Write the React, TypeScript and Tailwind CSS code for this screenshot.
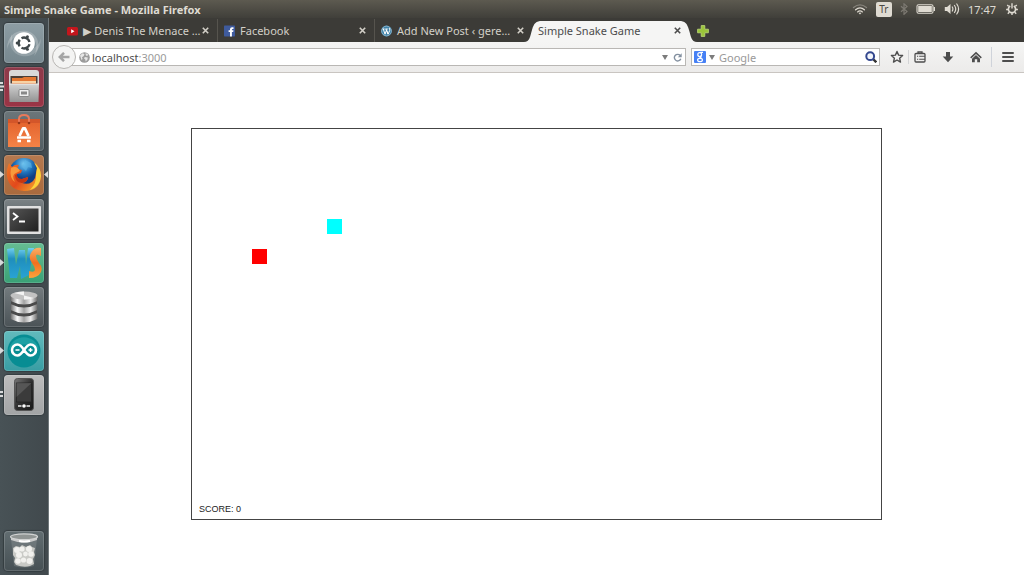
import React, { useState } from "react";

const CELL = 15;

type Point = { x: number; y: number };

const food: Point = { x: 9, y: 6 };
const snake: Point[] = [{ x: 4, y: 8 }];

/* ---------- Top panel ---------- */

function WifiIcon() {
  return (
    <svg className="h-3 w-4" viewBox="0 0 16 12" fill="none" strokeWidth="1.3" strokeLinecap="round">
      <path d="M1.5 4.5Q8-.8 14.5 4.5" stroke="#85827a" />
      <path d="M3.6 6.8Q8 3 12.4 6.8" stroke="#dfdbd2" />
      <path d="M5.6 8.9Q8 7 10.4 8.9" stroke="#dfdbd2" />
      <path d="M6.6 10 8 11.4 9.4 10Q8 9 6.6 10Z" fill="#dfdbd2" stroke="none" />
    </svg>
  );
}

function BluetoothIcon() {
  return (
    <svg className="h-3 w-2" viewBox="0 0 8 12" fill="none" stroke="#7d7a72" strokeWidth="1.2">
      <path d="M1 3.2 7 8.6 4 11.3V.8L7 3.4 1 8.8" />
    </svg>
  );
}

function BatteryIcon() {
  return (
    <svg className="h-2.5 w-5" viewBox="0 0 20 10">
      <rect x="1" y=".8" width="16" height="8.4" rx="1.5" fill="none" stroke="#dfdbd2" strokeWidth="1.1" />
      <rect x="2.2" y="2" width="13.6" height="6" fill="#dfdbd2" />
      <rect x="17.6" y="3" width="1.4" height="4" fill="#dfdbd2" />
    </svg>
  );
}

function VolumeIcon() {
  return (
    <svg className="h-3 w-4" viewBox="0 0 16 12" fill="none" stroke="#dfdbd2" strokeWidth="1.2" strokeLinecap="round">
      <path d="M.8 4H3L6.5 1V11L3 8H.8Z" fill="#dfdbd2" stroke="none" />
      <path d="M8.3 4Q9.5 6 8.3 8M10.5 2.5Q13 6 10.5 9.5M12.8 1Q16.4 6 12.8 11" />
    </svg>
  );
}

function SessionIcon() {
  return (
    <svg className="h-3 w-3" viewBox="0 0 12 12" fill="none" stroke="#dfdbd2">
      <path d="M4.2 3A3.6 3.6 0 1 0 7.8 3" strokeWidth="1.7" />
      <path d="M6 .3V5.4M1.2 2 2.6 3.3M10.8 2 9.4 3.3M.1 6.5H2M10 6.5H11.9M1.8 10.8 3.2 9.3M10.2 10.8 8.8 9.3M6 10V12" strokeWidth="1.4" />
    </svg>
  );
}

function TopPanel() {
  return (
    <header className="flex h-[18px] shrink-0 items-center bg-linear-to-b from-[#5d5a50] to-[#403f3a] px-1 text-[11px] text-[#dfdbd2]">
      <h1 className="grow font-bold">Simple Snake Game - Mozilla Firefox</h1>
      <div className="flex items-center gap-2 pr-0.5">
        <WifiIcon />
        <span className="flex h-[15px] w-4 items-center justify-center rounded-xs bg-[#dfdbd2] text-[10px] text-[#4a4842]">Tr</span>
        <BluetoothIcon />
        <BatteryIcon />
        <VolumeIcon />
        <time className="pr-0.5">17:47</time>
        <SessionIcon />
      </div>
    </header>
  );
}

/* ---------- Launcher ---------- */

function UbuntuIcon() {
  return (
    <svg viewBox="0 0 40 40">
      <path d="M3 26C3 12 13 6 23 8 35 11 38 25 30 33 37 18 27 11 19 12 9 13 5 19 3 26Z" fill="#fff" opacity=".22" />
      <path d="M37 15C37 28 28 35 18 33 8 31 3 21 8 11 7 24 15 30 23 28 31 26 35 22 37 15Z" fill="#fff" opacity=".18" />
      <circle cx="20" cy="20" r="10.8" fill="#fff" />
      <g fill="none" stroke="#3f474a" strokeWidth="2.4">
        <path d="M17.5 15.2A5.6 5.6 0 0 1 25.5 19M25.5 21.2A5.6 5.6 0 0 1 17.5 24.8M15.7 23.3A5.6 5.6 0 0 1 15.7 16.8" />
      </g>
      <g fill="#3f474a">
        <circle cx="13.2" cy="20" r="1.5" />
        <circle cx="23.4" cy="13.7" r="1.5" />
        <circle cx="23.4" cy="26.3" r="1.5" />
      </g>
    </svg>
  );
}

function FilesIcon() {
  return (
    <svg viewBox="0 0 40 40">
      <defs>
        <linearGradient id="drawer" x2="0" y2="1"><stop stopColor="#d2d2d2" /><stop offset="1" stopColor="#929292" /></linearGradient>
      </defs>
      <path d="M5 6Q5 3 8 3H32Q35 3 35 6V18H5Z" fill="#d9d9d9" />
      <rect x="6.5" y="9" width="27" height="10" fill="#4b3e37" />
      <path d="M8 11H18L20 10H32V19H8Z" fill="#e37732" />
      <path d="M8 14H32V16H8Z" fill="#f7d2a5" />
      <path d="M5 17H35L34.5 35H5.5Z" fill="url(#drawer)" />
      <path d="M5 17H35" stroke="#eee" />
      <rect x="15" y="22.5" width="10" height="7" rx="1" fill="#eee" stroke="#777" strokeWidth=".8" />
      <rect x="17" y="24.5" width="6" height="3" fill="#888" />
    </svg>
  );
}

function SoftwareIcon() {
  return (
    <svg viewBox="0 0 40 40">
      <defs>
        <linearGradient id="bag" x2="0" y2="1"><stop stopColor="#e2602b" /><stop offset="1" stopColor="#f48347" /></linearGradient>
      </defs>
      <path d="M4 8H36V36H4Z" fill="url(#bag)" />
      <path d="M4 8H36V12H4Z" fill="#d3562a" />
      <path d="M15 12V8Q15 4 20 4T25 8V12" fill="none" stroke="#e9795a" strokeWidth="2" />
      <circle cx="15" cy="12" r="1.3" fill="#943719" /><circle cx="25" cy="12" r="1.3" fill="#943719" />
      <g fill="none" stroke="#fff" strokeWidth="2.8">
        <path d="M15.5 25 19 17.5H21L24.5 25" strokeLinejoin="round" />
        <path d="M13 26.5H27" strokeWidth="2.3" />
        <path d="M13.5 30H17M23 30H26.5" strokeWidth="2.3" />
      </g>
    </svg>
  );
}

function FirefoxIcon() {
  return (
    <svg viewBox="0 0 40 40">
      <defs>
        <radialGradient id="globe" cx=".5" cy=".2"><stop stopColor="#7ccdf3" /><stop offset=".6" stopColor="#1d6fb8" /><stop offset="1" stopColor="#123f83" /></radialGradient>
        <linearGradient id="fox" x2="1" y2=".7"><stop stopColor="#ef7b27" /><stop offset=".55" stopColor="#e2491c" /><stop offset="1" stopColor="#f3a02c" /></linearGradient>
      </defs>
      <circle cx="20" cy="18" r="15" fill="url(#globe)" />
      <path d="M21 5 27 8 28 13 24 12 22 16 18 12Z" fill="#5bb5e8" opacity=".6" />
      <path d="M5 8 8 12Q11 9 15 10L13 14 18 15 17 18 13 19Q12 24 18 24L24 22Q24 27 18 28 27 31 31 23L33 13 30 7Q37 13 37 21 36 36 20 36 5 35 3 21 2 15 5 8Z" fill="url(#fox)" />
      <path d="M30 7Q37 13 37 21 36 32 26 35 33 28 32 19L33 13Z" fill="#fbd33b" />
      <path d="M7 13Q13 10 16 16L12 18Q7 20 11 27 5 23 7 13Z" fill="#f89a3b" />
      <path d="M13 19Q12 24 18 24L24 22Q24 27 18 28 11 27 11 20Z" fill="#c43614" />
    </svg>
  );
}

function TerminalIcon() {
  return (
    <svg viewBox="0 0 40 40">
      <defs><linearGradient id="screen" x2="1" y2="1"><stop stopColor="#555" /><stop offset="1" stopColor="#202020" /></linearGradient></defs>
      <rect x="3" y="7" width="34" height="28" rx="1" fill="#e1e1e1" />
      <rect x="5.5" y="9.5" width="29" height="23" fill="url(#screen)" />
      <path d="M9 14 13.5 17.5 9 21" fill="none" stroke="#fff" strokeWidth="1.8" />
      <path d="M15 22.5H21" stroke="#fff" strokeWidth="1.8" />
    </svg>
  );
}

function WebStormIcon() {
  return (
    <svg viewBox="0 0 40 40">
      <defs>
        <linearGradient id="blue" x2="0" y2="1"><stop stopColor="#72cff1" /><stop offset=".35" stopColor="#1f8ebd" /><stop offset="1" stopColor="#2aa4d4" /></linearGradient>
        <linearGradient id="orange" x2="0" y2="1"><stop stopColor="#f9b066" /><stop offset=".5" stopColor="#f0701f" /><stop offset="1" stopColor="#ffa33c" /></linearGradient>
      </defs>
      <path d="M3 6 10 5 12 22 15 7H21L22 22 24 5H30L25 32 17 36 16 23 13 35 6 35Z" fill="url(#blue)" />
      <path d="M37 5V13Q32 10 32 13 32 16 35 20 39 24 37 29 34 35 25 35L25 28Q30 30 31 27 31 24 28 20 24 15 27 10 30 4 37 5Z" fill="url(#orange)" />
    </svg>
  );
}

function DatabaseIcon() {
  return (
    <svg viewBox="0 0 40 40">
      <defs>
        <linearGradient id="disk"><stop stopColor="#666" /><stop offset=".25" stopColor="#fafafa" /><stop offset=".5" stopColor="#a2a2a2" /><stop offset=".75" stopColor="#ededed" /><stop offset="1" stopColor="#666" /></linearGradient>
      </defs>
      <path d="M7 8V32Q20 39 33 32V8Z" fill="#4a4a4a" />
      {[9, 18, 27].map((y) => (
        <path key={y} d={`M6.5 ${y - 1}Q20 ${y + 6} 33.5 ${y - 1}V${y + 5}Q20 ${y + 12} 33.5 ${y + 5}Q20 ${y + 12} 6.5 ${y + 5}Z`} fill="url(#disk)" />
      ))}
      <ellipse cx="20" cy="8.5" rx="13.5" ry="4" fill="#c2c2c2" />
      <path d="M20 8.5 10 6Q15 4.3 20 4.5ZM20 8.5 30 11Q25 12.8 20 12.5Z" fill="#f3f3f3" />
    </svg>
  );
}

function ArduinoIcon() {
  return (
    <svg viewBox="0 0 40 40">
      <circle cx="20" cy="20" r="16.5" fill="#078d93" />
      <path d="M5 19Q20 8 35 19A15.2 15.2 0 0 0 5 19Z" fill="#33b3b6" opacity=".5" />
      <path d="M20 19C17 14 15 13.5 13.5 13.5A5.5 5.5 0 0 0 13.5 24.5C16 24.5 18 22 20 19C22 16 24 13.5 26.5 13.5A5.5 5.5 0 0 1 26.5 24.5C24 24.5 22 22 20 19Z" fill="none" stroke="#fff" strokeWidth="2.6" />
      <path d="M11.5 19H15.5M24.5 19H28.5M26.5 17V21" stroke="#fff" strokeWidth="1.4" />
    </svg>
  );
}

function PhoneIcon() {
  return (
    <svg viewBox="0 0 40 40">
      <defs><linearGradient id="phone" x2="1" y2="1"><stop stopColor="#777" /><stop offset=".5" stopColor="#303030" /><stop offset="1" stopColor="#181818" /></linearGradient></defs>
      <rect x="10.5" y="3.5" width="19" height="32" rx="3" fill="url(#phone)" stroke="#555" />
      <rect x="12.5" y="8" width="15" height="19" fill="#3b3b3b" stroke="#222" strokeWidth=".7" />
      <path d="M12.5 8H27.5L12.5 22Z" fill="#777" opacity=".45" />
      <path d="M14 31H17.5M22.5 31H26" stroke="#eee" strokeWidth="1.5" />
      <circle cx="20" cy="31" r="1.8" fill="#fff" />
    </svg>
  );
}

function TrashIcon() {
  return (
    <svg viewBox="0 0 40 40">
      <path d="M7 8H33L30 35Q20 38 10 35Z" fill="#adb1b1" opacity=".25" />
      <path d="M9 17 12 15 16 16 18 14 22 16 26 14 28 16 31 17 30 21 31 24 29 28 30 33 26 35Q20 37 12 34L10 31 11 27 9 24Z" fill="#c9cac6" />
      <g fill="#f1f1ee">
        <circle cx="13" cy="19" r="3" /><circle cx="18" cy="18" r="2.6" /><circle cx="25" cy="18" r="3" /><circle cx="15" cy="24" r="3" /><circle cx="27" cy="23" r="2.8" /><circle cx="21.5" cy="23" r="2.4" /><circle cx="14" cy="30" r="2.8" /><circle cx="19.5" cy="29" r="2.6" /><circle cx="25.5" cy="30" r="3" />
      </g>
      <path d="M7 6V9Q20 14 33 9V6Z" fill="#c9caca" />
      <ellipse cx="20" cy="5.8" rx="13.5" ry="2.9" fill="#909594" stroke="#d1d3d3" strokeWidth="1.2" />
      <path d="M15 10Q20 11 26 10" stroke="#fff" strokeWidth="2" fill="none" />
    </svg>
  );
}

type Mark = "running" | "active" | "multiple" | "pair";

type LauncherItem = {
  name: string;
  tile: string;
  icon: React.ReactNode;
  mark?: Mark;
};

const launcherItems: LauncherItem[] = [
  { name: "Dash", tile: "from-[#8d9da4] to-[#77888f]", icon: <UbuntuIcon /> },
  { name: "Files", tile: "from-[#8d3a4a] to-[#9a3445]", icon: <FilesIcon />, mark: "multiple" },
  { name: "Software Center", tile: "from-[#6c767a] to-[#525d62]", icon: <SoftwareIcon /> },
  { name: "Firefox", tile: "from-[#b5794f] to-[#a96a3d]", icon: <FirefoxIcon />, mark: "active" },
  { name: "Terminal", tile: "from-[#7b8285] to-[#495256]", icon: <TerminalIcon /> },
  { name: "WebStorm", tile: "from-[#65bd93] to-[#39a176]", icon: <WebStormIcon />, mark: "running" },
  { name: "Database", tile: "from-[#737b7e] to-[#4b5357]", icon: <DatabaseIcon /> },
  { name: "Arduino", tile: "from-[#62bbbd] to-[#389da3]", icon: <ArduinoIcon />, mark: "running" },
  { name: "Phone Emulator", tile: "from-[#bdbdbd] to-[#a2a4a5]", icon: <PhoneIcon />, mark: "pair" },
];

function RunningMark({ mark }: { mark: Mark }) {
  return (
    <svg className="absolute inset-y-0 left-0 h-10 w-full" viewBox="0 0 48 40" fill="#d8dadb" aria-hidden="true">
      {(mark === "running" || mark === "active") && <path d="M0 16 4 19.5 0 23Z" />}
      {mark === "active" && <path d="M48 16 44 19.5 48 23Z" />}
      {mark === "multiple" && <path d="M0 15H3V17H0ZM0 18.5H4V20.5H0ZM0 22H3V24H0Z" />}
      {mark === "pair" && <path d="M0 16H3V18H0ZM0 20H3V22H0Z" />}
    </svg>
  );
}

function LauncherButton({ item }: { item: LauncherItem }) {
  return (
    <li className="relative flex justify-center pr-px">
      {item.mark && <RunningMark mark={item.mark} />}
      <button
        aria-label={item.name}
        className={`size-10 overflow-hidden rounded-sm bg-linear-to-b shadow-[0_0_1px_1px_#343c40] inset-ring inset-ring-white/15 ${item.tile}`}
      >
        {item.icon}
      </button>
    </li>
  );
}

function Launcher() {
  return (
    <nav aria-label="Launcher" className="flex w-[49px] shrink-0 flex-col justify-between border-r border-[#70787b] bg-linear-to-r from-[#485256] to-[#41494d] pt-[5px] pb-1">
      <ul className="flex flex-col gap-1">
        {launcherItems.map((item) => (
          <LauncherButton key={item.name} item={item} />
        ))}
      </ul>
      <ul>
        <LauncherButton item={{ name: "Trash", tile: "from-[#626d71] to-[#465054]", icon: <TrashIcon /> }} />
      </ul>
    </nav>
  );
}

/* ---------- Tabs ---------- */

function YouTubeIcon() {
  return (
    <svg className="h-3 w-[11px] shrink-0" viewBox="0 0 11 12"><rect y="2" width="11" height="8.5" rx="1.5" fill="#c4161c" /><path d="M4.2 4.2 7.5 6.2 4.2 8.2Z" fill="#fff" /></svg>
  );
}

function FacebookIcon() {
  return (
    <svg className="h-3 w-[11px] shrink-0" viewBox="0 0 11 12"><rect y=".5" width="11" height="11" rx=".7" fill="#3f5b9d" /><path d="M6 11.5V7H4.6V5.3H6V4.2Q6 2.3 8 2.3H9.5V4H8.6Q7.9 4 7.9 4.7V5.3H9.5L9.2 7H7.9V11.5Z" fill="#fff" /></svg>
  );
}

function WordPressIcon() {
  return (
    <svg className="h-3 w-[11px] shrink-0" viewBox="0 0 11 12" fill="none">
      <circle cx="5.5" cy="6" r="5.4" fill="#3f82a8" />
      <circle cx="5.5" cy="6" r="4.9" stroke="#b5d2e2" strokeWidth=".6" />
      <path d="M1.6 4H3.6M4.3 4H6.8M2.3 4 4 9.2 5.5 5 7.1 9.2 8.7 5.5Q9 4 8 3M5 4 7 9" stroke="#fff" strokeWidth="1" />
    </svg>
  );
}

type Tab = { title: string; icon?: React.ReactNode };

const tabs: Tab[] = [
  { title: "▶ Denis The Menace …", icon: <YouTubeIcon /> },
  { title: "Facebook", icon: <FacebookIcon /> },
  { title: "Add New Post ‹ gere…", icon: <WordPressIcon /> },
  { title: "Simple Snake Game" },
];

function TabItem({ tab, active, divided }: { tab: Tab; active: boolean; divided: boolean }) {
  return (
    <div
      className={`relative flex h-full w-[157px] shrink items-center gap-1 pr-2 pl-1.5 ${
        active ? "text-[#4c4c4c]" : "text-[#d3d0c8]"
      } ${divided ? "border-r border-[#56544e]" : ""}`}
    >
      {active && (
        <svg className="absolute bottom-0 -left-2 h-[21px] w-[173px]" viewBox="0 0 173 21" preserveAspectRatio="none" aria-hidden="true">
          <path d="M0 21C6 21 6 15 8 9C10 2 12 0 18 0H155C161 0 163 2 165 9C167 15 167 21 173 21Z" fill="#f5f5f4" />
        </svg>
      )}
      <button role="tab" aria-selected={active} className="relative flex min-w-0 grow items-center gap-[5px] text-left whitespace-nowrap">
        {tab.icon}
        <span>{tab.title}</span>
      </button>
      <button aria-label={`Close ${tab.title}`} className="relative shrink-0">
        <svg className="size-[7px]" viewBox="0 0 7 7" stroke="currentColor" strokeWidth="1.6"><path d="M.8.8 6.2 6.2M6.2.8.8 6.2" /></svg>
      </button>
    </div>
  );
}

function TabStrip() {
  return (
    <div className="flex h-6 shrink-0 items-center bg-[#3c3b37] pt-px pl-3">
      <div role="tablist" className="flex h-full min-w-0">
        {tabs.map((tab, i) => (
          <TabItem key={tab.title} tab={tab} active={i === tabs.length - 1} divided={i < 2} />
        ))}
      </div>
      <button aria-label="Open a new tab" className="ml-2">
        <svg className="size-3" viewBox="0 0 12 12"><path d="M4.2.6H7.8V4.2H11.4V7.8H7.8V11.4H4.2V7.8H.6V4.2H4.2Z" fill="#9bc53a" stroke="#bfdc78" strokeWidth=".8" /></svg>
      </button>
    </div>
  );
}

/* ---------- Navigation toolbar ---------- */

function DropArrow() {
  return (
    <svg className="h-[5px] w-1.5 shrink-0" viewBox="0 0 6 5" fill="#7c7c7c"><path d="M0 0H6L3 5Z" /></svg>
  );
}

function Toolbar() {
  const [address, setAddress] = useState("localhost:3000");
  const [query, setQuery] = useState("");
  const [host, port] = address.split(/:(.*)/);

  return (
    <div className="flex h-[31px] shrink-0 items-center border-b border-[#c9c5c1] bg-linear-to-b from-[#f5f5f4] to-[#ecebea] pr-[9px] pl-[3px] text-[#4d4d4d]">
      <button aria-label="Back" className="relative flex size-6 shrink-0 items-center justify-center rounded-full border border-[#b8b6b3] bg-[#f4f4f3]">
        <svg className="h-2.5 w-3" viewBox="0 0 12 10" fill="none" stroke="#a5a5a5" strokeWidth="2.5"><path d="M6 .8 1.8 5 6 9.2M2 5H11.5" /></svg>
      </button>
      <div className="-ml-1 flex h-[18px] grow items-center border border-[#b9b7b4] bg-white pr-[3px] pl-1.5">
        <svg className="size-[11px] shrink-0" viewBox="0 0 11 11"><circle cx="5.5" cy="5.5" r="5.3" fill="#9c9c9c" /><path d="M1 3.5 3.5 1.2 5.5 2 4.8 4 3 5.2 3.6 7 2.5 8ZM6.5 1 9.2 2.6 8.3 4 6.8 3.4ZM5.8 5 8.8 5.4 8.5 7.4 6.7 9.6 6.3 7.5 5 6.5Z" fill="#e6e6e6" /></svg>
        <label className="relative ml-0.5 flex min-w-0 grow items-center">
          <span aria-hidden="true" className="pointer-events-none absolute left-0 whitespace-pre">
            {host}
            {port !== undefined && <span className="text-[#9a9a9a]">:{port}</span>}
          </span>
          <input
            aria-label="Address"
            className="w-full bg-transparent text-transparent caret-[#4d4d4d] outline-none"
            value={address}
            onChange={(e) => setAddress(e.target.value)}
          />
        </label>
        <button aria-label="Show history" className="px-[5px]"><DropArrow /></button>
        <button aria-label="Reload">
          <svg className="size-[9px]" viewBox="0 0 9 9" fill="none" stroke="#8390a0" strokeWidth="1.4"><path d="M7.2 2.5A3.3 3.3 0 1 0 7.8 5.7" /><path d="M8.7.2V4.2H4.8Z" fill="#8390a0" stroke="none" /></svg>
        </button>
      </div>
      <form className="ml-[5px] flex h-[18px] w-[189px] items-center border border-[#b9b7b4] bg-white px-0.5" onSubmit={(e) => e.preventDefault()}>
        <svg className="size-3 shrink-0" viewBox="0 0 12 12"><rect width="12" height="12" rx="1" fill="#4680f5" /><g fill="none" stroke="#fff" strokeWidth="1.2"><ellipse cx="5.7" cy="3.6" rx="1.9" ry="2" /><path d="M6.2 1.3H9M7.3 5 6 6.2 7.8 7.5" /><ellipse cx="6" cy="9" rx="2.4" ry="1.7" /></g></svg>
        <button type="button" aria-label="Choose search engine" className="px-[3px]"><DropArrow /></button>
        <input
          aria-label="Search"
          placeholder="Google"
          className="ml-px w-full min-w-0 grow bg-transparent outline-none placeholder:text-[#999999]"
          value={query}
          onChange={(e) => setQuery(e.target.value)}
        />
        <button aria-label="Run search">
          <svg className="size-3" viewBox="0 0 12 12" fill="none"><path d="M8 8 11.3 11.3" stroke="#333" strokeWidth="2.4" /><circle cx="5.2" cy="5.2" r="3.9" fill="#f2f5fb" stroke="#34488f" strokeWidth="2" /></svg>
        </button>
      </form>
      <button aria-label="Bookmark this page" className="ml-2.5">
        <svg className="size-3.5" viewBox="0 0 14 14" fill="none" stroke="#4d4d4d" strokeWidth="1.4" strokeLinejoin="round"><path d="M7 1.5 8.6 5.1 12.6 5.5 9.6 8.2 10.5 12.1 7 10 3.5 12.1 4.4 8.2 1.4 5.5 5.4 5.1Z" /></svg>
      </button>
      <span className="mx-1 h-3.5 w-px bg-[#d3d4d6]" />
      <button aria-label="Show bookmarks">
        <svg className="size-3.5" viewBox="0 0 14 14" fill="none" stroke="#4d4d4d" strokeWidth="1.3"><rect x="2" y="3.5" width="10" height="8.5" rx="1" /><path d="M5 3.5V2H9V3.5" /><path d="M4 6.3H5.2M6.2 6.3H12M4 9.2H5.2M6.2 9.2H12" strokeWidth="1.1" /></svg>
      </button>
      <button aria-label="Downloads" className="ml-[15px]">
        <svg className="size-3" viewBox="0 0 12 12" fill="#4d4d4d"><path d="M4 1H8V5.5H11.3L6 11.2.7 5.5H4Z" /></svg>
      </button>
      <button aria-label="Home" className="ml-4">
        <svg className="size-3" viewBox="0 0 12 12" fill="#4d4d4d"><path d="M6 .7 11.8 6.3 10.8 7.4 6 2.9 1.2 7.4.2 6.3ZM6 4 10 7.8V11.3H7.2V8.2H4.8V11.3H2V7.8Z" /></svg>
      </button>
      <span className="mx-[9px] h-5 w-px bg-[#cfd3da]" />
      <button aria-label="Menu">
        <svg className="h-3 w-3.5" viewBox="0 0 14 12" stroke="#4d4d4d" strokeWidth="2" strokeLinecap="round"><path d="M2 2H12M2 6H12M2 10H12" /></svg>
      </button>
    </div>
  );
}

/* ---------- Game ---------- */

function Cell({ at, color }: { at: Point; color: string }) {
  return (
    <div
      className={`absolute size-[15px] ${color}`}
      style={{ left: at.x * CELL, top: at.y * CELL }}
    />
  );
}

function SnakeGame() {
  return (
    <main className="flex grow justify-center bg-white pt-[55px]">
      <section aria-label="Snake board" className="relative flex h-[392px] w-[691px] items-end border border-[#444444]">
        <Cell at={food} color="bg-[#00ffff]" />
        {snake.map((part) => (
          <Cell key={`${part.x}-${part.y}`} at={part} color="bg-[#ff0000]" />
        ))}
        <p className="px-[7px] pb-[3px] font-['Liberation_Sans',sans-serif] text-[9px] leading-[14px] text-[#222222]">SCORE: 0</p>
      </section>
    </main>
  );
}

export default function App() {
  return (
    <div className="flex min-h-screen flex-col bg-white font-['Noto_Sans','DejaVu_Sans',sans-serif] text-[11px] leading-[15px]">
      <TopPanel />
      <div className="flex grow">
        <Launcher />
        <div className="flex min-w-0 grow flex-col">
          <TabStrip />
          <Toolbar />
          <SnakeGame />
        </div>
      </div>
    </div>
  );
}
